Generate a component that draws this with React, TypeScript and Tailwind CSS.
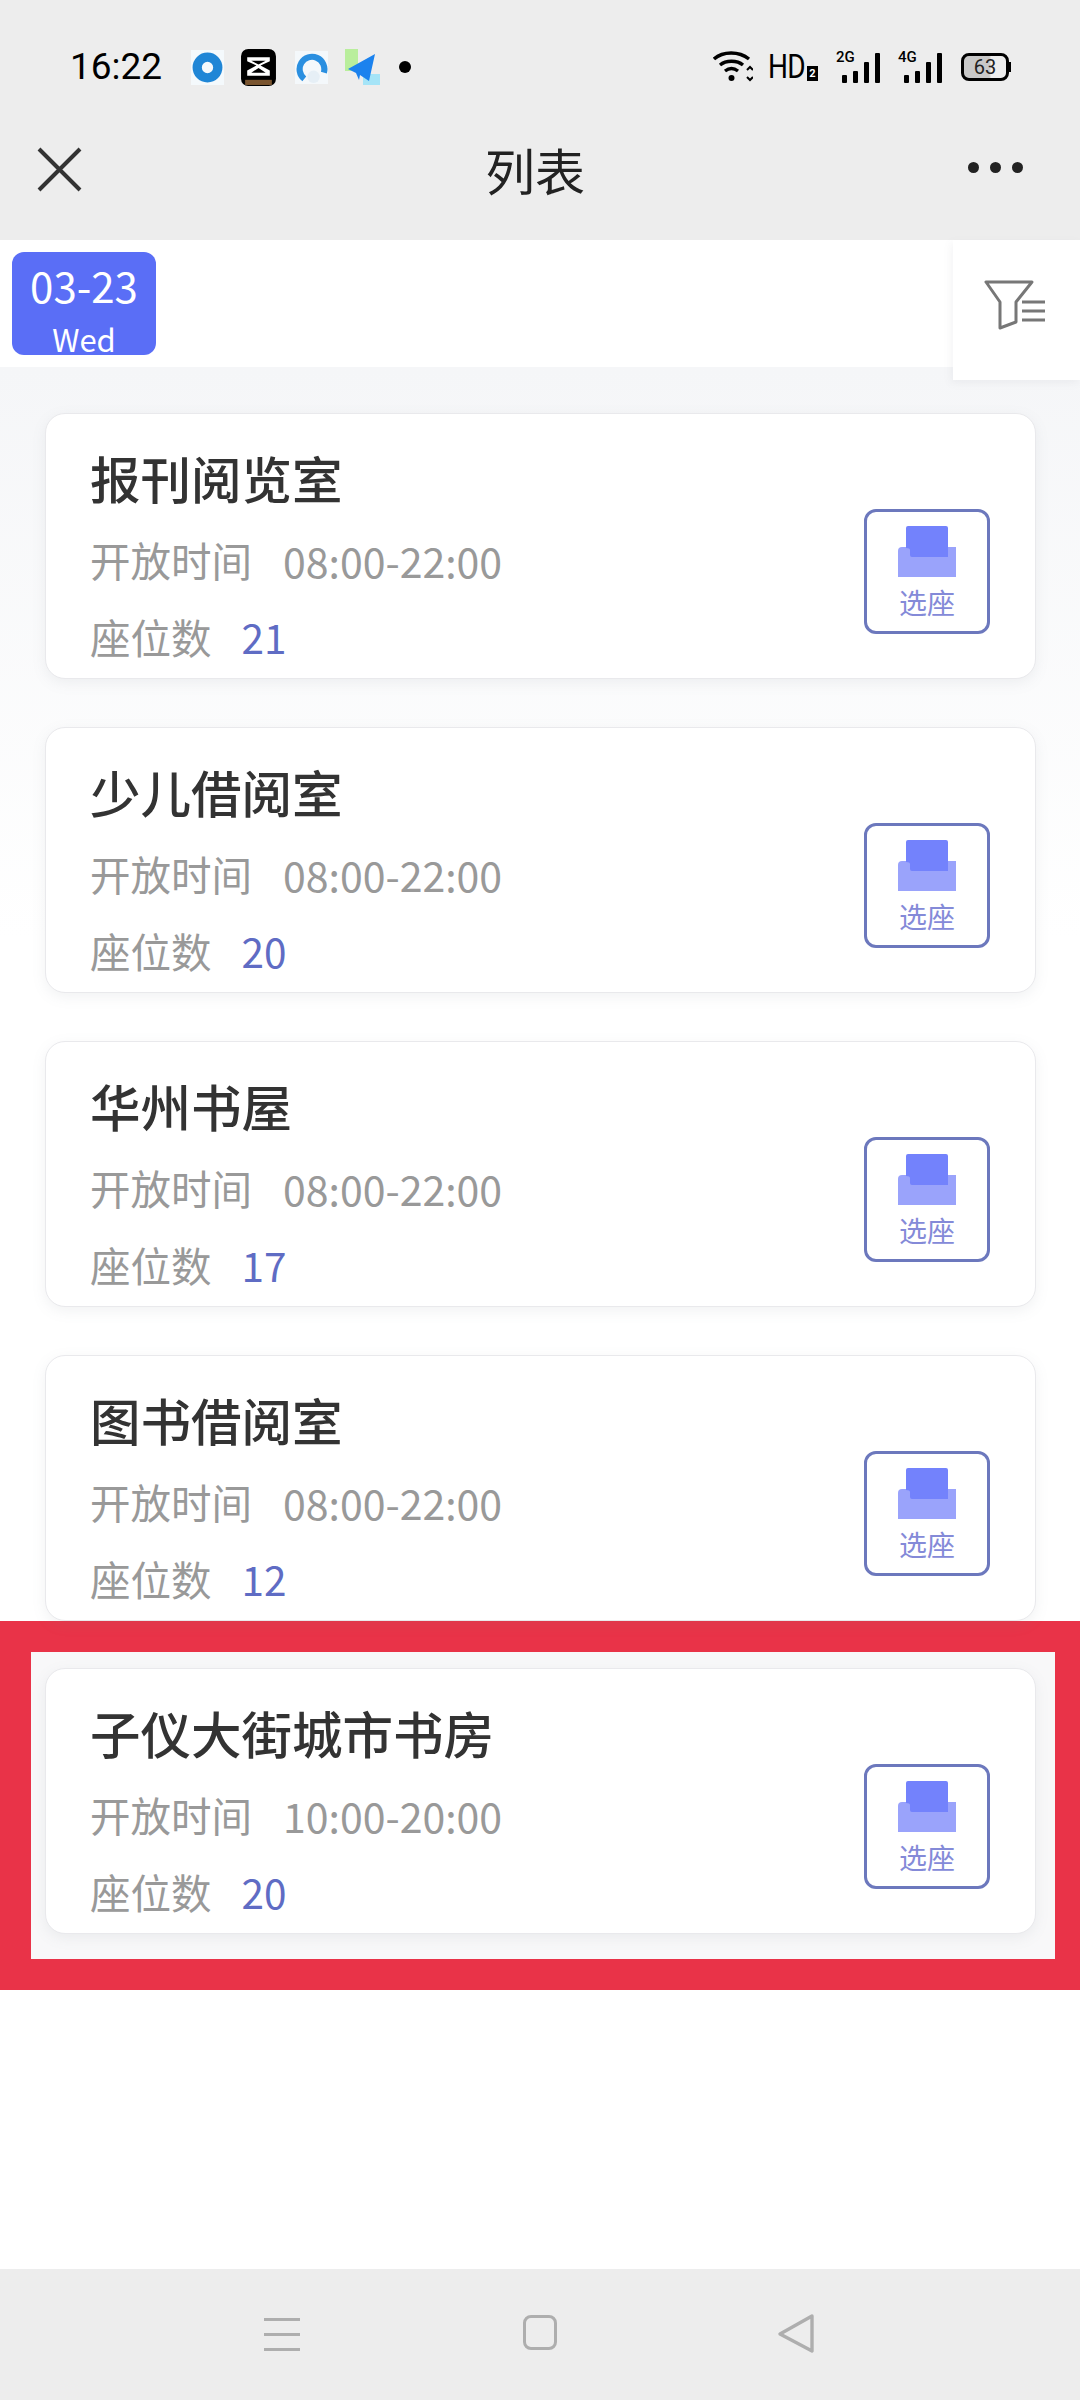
const FONT = "font-['Noto_Sans_CJK_SC','Noto_Sans',sans-serif]";

const rooms = [
  { name: "报刊阅览室", hours: "08:00-22:00", seats: 21 },
  { name: "少儿借阅室", hours: "08:00-22:00", seats: 20 },
  { name: "华州书屋", hours: "08:00-22:00", seats: 17 },
  { name: "图书借阅室", hours: "08:00-22:00", seats: 12 },
];

const AppIcons = () => (
  <div className="flex items-center ml-[29px]">
    <svg width="33" height="35" viewBox="0 0 32 34">
      <rect width="32" height="34" fill="#f4f9fc" />
      <circle cx="16" cy="17" r="10" fill="none" stroke="#1f86d6" strokeWidth="9" />
    </svg>
    <svg width="35" height="37" viewBox="0 0 34 36" className="ml-[17px]">
      <rect width="34" height="36" rx="7" fill="#000" />
      <path d="M6 8 L28 8 L28 12 L19 16 L28 21 L28 26 L6 26 L6 21 L15 16 L6 12 Z" fill="#fff" />
      <path d="M10 11.5 L24 11.5 L17 15 Z M10 23 L24 23 L17 18.5 Z" fill="#000" />
      <rect x="4" y="30" width="26" height="5" fill="#7a5530" />
    </svg>
    <svg width="33" height="33" viewBox="0 0 32 32" className="ml-[19px]">
      <rect width="32" height="32" fill="#f4f8fb" />
      <path d="M28 21 A12 12 0 1 0 9 27" fill="none" stroke="#2a8fe0" strokeWidth="6" />
      <circle cx="18" cy="25" r="6" fill="#e6eff6" />
    </svg>
    <svg width="38" height="36" viewBox="0 0 38 36" className="ml-[17px]">
      <rect x="0" y="0" width="13" height="22" fill="#b9ee9c" />
      <rect x="18" y="25" width="17" height="11" fill="#a5e4f7" />
      <path d="M3 20 L30 5 L24 32 L15 26 L14 31 L11 24 Z" fill="#1b82ee" />
    </svg>
    <div className="ml-[16px] w-[12px] h-[12px] rounded-full bg-black" />
  </div>
);

const Signal = ({ label }: { label: string }) => (
  <div className="relative w-[44px] h-[32px]">
    <span className="absolute left-0 top-[-3px] text-[15px] leading-[18px] font-['Roboto'] font-medium text-black">
      {label}
    </span>
    <div className="absolute right-0 bottom-0 flex items-end gap-[6px]">
      <div className="w-[5px] h-[8px] bg-black rounded-[1px] ml-[5px]" />
      <div className="w-[5px] h-[12px] bg-black rounded-[1px]" />
      <div className="w-[5px] h-[21px] bg-black rounded-[1px]" />
      <div className="w-[5px] h-[30px] bg-black rounded-[1px]" />
    </div>
  </div>
);

const StatusRight = () => (
  <div className="flex items-center">
    <svg width="40" height="32" viewBox="0 0 40 32">
      <path d="M1 8 C10 0 26 0 36 8" fill="none" stroke="#000" strokeWidth="3.4" />
      <path d="M7 14 C13 9 24 9 30 14" fill="none" stroke="#000" strokeWidth="3.4" />
      <path d="M12 20 C16 17 21 17 25 20" fill="none" stroke="#000" strokeWidth="3.4" />
      <circle cx="18.5" cy="27" r="3" fill="#000" />
      <path d="M34 19 L37 16 L40 19 M34 26 L37 29 L40 26" fill="none" stroke="#000" strokeWidth="2" />
    </svg>
    <div className="flex items-end ml-[15px]">
      <span className="font-['Roboto'] text-[33px] leading-[30px] text-black tracking-[-1px] scale-x-[0.85] origin-left w-[39px]">HD</span>
      <span className="w-[11px] h-[15px] mb-[1px] bg-black text-white text-[11px] leading-[15px] text-center font-['Roboto'] font-bold">2</span>
    </div>
    <div className="ml-[18px]"><Signal label="2G" /></div>
    <div className="ml-[18px]"><Signal label="4G" /></div>
    <div className="ml-[19px] flex items-center">
      <div className="w-[48px] h-[28px] rounded-[8px] border-[3px] border-black bg-gradient-to-r from-[#c8c8c8] from-60% to-[#ededed] to-65% flex items-center justify-center font-['Roboto'] text-[20px] leading-none text-[#222]">
        63
      </div>
      <div className="w-[2px] h-[10px] bg-black" />
    </div>
  </div>
);

const SeatButton = () => (
  <div className="mt-[95px] mr-[45px] w-[126px] h-[125px] shrink-0 rounded-[12px] border-[3px] border-[#6c78bd] flex flex-col items-center">
    <svg width="58" height="52" viewBox="0 0 58 52" className="mt-[14px]">
      <path d="M0 25 Q0 21 4 21 H58 V51 H0 Z" fill="#9aa3fb" />
      <path d="M54 21 Q58 21 58 25 V51 H40 V21 Z" fill="#9aa3fb" />
      <path d="M8 2 Q8 0 10 0 H48 Q50 0 50 2 V31 H14 Q12 31 12 29 V24 Q12 22 8 22 Z" fill="#7382fc" />
    </svg>
    <span className={`${FONT} text-[28px] leading-[36px] text-[#848ad8] mt-[6px]`}>选座</span>
  </div>
);

const Card = ({ name, hours, seats }: { name: string; hours: string; seats: number }) => (
  <div className="h-[266px] rounded-[20px] bg-white border border-[#e9e9ec] shadow-[0_4px_14px_rgba(120,125,140,0.10)] flex justify-between">
    <div className={`${FONT} pl-[44px] pt-[33px]`}>
      <div className="text-[50.5px] leading-[60px] font-medium text-[#333333]">{name}</div>
      <div className="mt-[28px] text-[40.5px] leading-[50px] text-[#999999] flex gap-[31px]">
        <span>开放时间</span>
        <span className="text-[41px]">{hours}</span>
      </div>
      <div className="mt-[27px] text-[40.5px] leading-[50px] text-[#999999] flex gap-[30px]">
        <span>座位数</span>
        <span className="text-[#5f6cc4]">{seats}</span>
      </div>
    </div>
    <SeatButton />
  </div>
);

export default function App() {
  return (
    <div className={`${FONT} w-[1080px] h-[2400px] bg-white flex flex-col overflow-hidden`}>
      <div className="h-[240px] shrink-0 bg-[#ededed]">
        <div className="h-[130px] pl-[70px] pr-[69px] pt-[47px] flex items-start justify-between">
          <div className="flex items-center h-[40px]">
            <span className="font-['Roboto'] text-[37px] leading-[40px] text-black">16:22</span>
            <AppIcons />
          </div>
          <div className="flex items-center h-[40px]">
            <StatusRight />
          </div>
        </div>
        <div className="relative h-[80px] flex items-center justify-center">
          <svg width="45" height="45" viewBox="0 0 45 45" className="absolute left-[37px] top-[17px]">
            <path d="M2 2 L43 43 M43 2 L2 43" stroke="#333" strokeWidth="4" fill="none" />
          </svg>
          <span className="text-[50px] leading-[60px] text-[#222222] mr-[10px] -mt-[3px]">列表</span>
          <div className="absolute right-[57px] top-[32px] flex gap-[11px]">
            <div className="w-[11px] h-[11px] rounded-full bg-[#222]" />
            <div className="w-[11px] h-[11px] rounded-full bg-[#222]" />
            <div className="w-[11px] h-[11px] rounded-full bg-[#222]" />
          </div>
        </div>
      </div>

      <div className="relative h-[127px] shrink-0 bg-white pl-[12px] pt-[12px]">
        <div className="w-[144px] h-[103px] rounded-[12px] bg-[#5a6ef6] text-white flex flex-col items-center">
          <span className="text-[42px] leading-[42px] mt-[12px]">03-23</span>
          <span className="text-[31px] leading-[30px] mt-[18px]">Wed</span>
        </div>
        <div className="absolute right-0 top-0 w-[127px] h-[140px] bg-white shadow-[-2px_3px_8px_rgba(120,120,130,0.08)] flex items-center justify-center">
          <svg width="64" height="50" viewBox="0 0 62 50" className="mr-[4px] mb-[10px]">
            <path d="M2 2 H48 L32 22 V42 L16 48 V22 Z" fill="none" stroke="#777" strokeWidth="3" strokeLinejoin="round" />
            <path d="M38 22 H61 M38 31 H61 M38 40 H61" stroke="#777" strokeWidth="3" />
          </svg>
        </div>
      </div>

      <div className="flex-1 bg-gradient-to-b from-[#f5f6f8] to-white to-[30%] pl-[45px] pr-[44px] pt-[46px]">
        <div className="flex flex-col gap-[48px]">
          {rooms.map((r) => (
            <Card key={r.name} {...r} />
          ))}
        </div>
        <div className="-ml-[45px] -mr-[44px] border-solid border-[#e93348] border-t-[31px] border-b-[31px] border-l-[31px] border-r-[25px] bg-[#f8f8f9] pl-[14px] pr-[19px] pt-[16px] pb-[25px]">
          <Card name="子仪大街城市书房" hours="10:00-20:00" seats={20} />
        </div>
      </div>

      <div className="h-[131px] shrink-0 bg-[#ededed] flex items-start pt-[46px]">
        <div className="ml-[264px] w-[36px] flex flex-col gap-[12px] mt-[3px]">
          <div className="h-[3px] bg-[#aeaeae]" />
          <div className="h-[3px] bg-[#aeaeae]" />
          <div className="h-[3px] bg-[#aeaeae]" />
        </div>
        <div className="ml-[223px] w-[34px] h-[35px] rounded-[8px] border-[3px] border-[#aeaeae]" />
        <svg width="38" height="40" viewBox="0 0 38 40" className="ml-[220px] -mt-[1px]">
          <path d="M35 2 L3 20 L35 37 Z" fill="none" stroke="#aeaeae" strokeWidth="3.4" strokeLinejoin="round" />
        </svg>
      </div>
    </div>
  );
}
